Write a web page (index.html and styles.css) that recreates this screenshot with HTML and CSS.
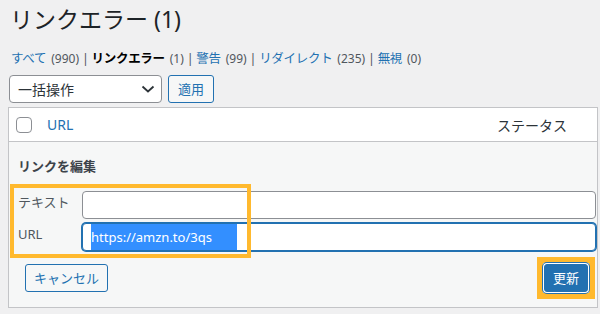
FILE: index.html
```html
<!DOCTYPE html>
<html lang="ja">
<head>
<meta charset="utf-8">
<link rel="stylesheet" href="styles.css">
</head>
<body>
<div class="wrap">
  <h1 class="title">リンクエラー (1)</h1>
  <ul class="subsub">
    <li><a href="#">すべて <span class="count">(990)</span></a> |</li>
    <li><a href="#" class="current">リンクエラー <span class="count">(1)</span></a> |</li>
    <li><a href="#">警告 <span class="count">(99)</span></a> |</li>
    <li><a href="#">リダイレクト <span class="count">(235)</span></a> |</li>
    <li><a href="#">無視 <span class="count">(0)</span></a></li>
  </ul>
  <div class="actions">
    <div class="select">
      <span>一括操作</span>
      <svg class="chev" width="14" height="8" viewBox="0 0 14 8"><path d="M1.5 1.5 L7 6.5 L12.5 1.5" fill="none" stroke="#2c3338" stroke-width="1.8"/></svg>
    </div>
    <button class="btn">適用</button>
  </div>
  <div class="table">
    <div class="thead">
      <span class="cb"></span>
      <a href="#" class="col-url">URL</a>
      <span class="col-status">ステータス</span>
    </div>
    <div class="edit">
      <div class="edit-title">リンクを編集</div>
      <div class="fields">
        <span class="label">テキスト</span>
        <div class="input"></div>
        <span class="label">URL</span>
        <div class="input focus"><span class="sel">https://amzn.to/3qs</span></div>
        <div class="hl-fields"></div>
      </div>
      <div class="buttons">
        <button class="btn cancel">キャンセル</button>
        <span class="hl-btn"><button class="btn primary">更新</button></span>
      </div>
    </div>
  </div>
</div>
</body>
</html>
```
FILE: styles.css
```css
* { box-sizing: border-box; }
html, body { margin: 0; padding: 0; }
body {
  background: #f0f0f1;
  font-family: "Noto Sans", "Noto Sans CJK JP", sans-serif;
  font-size: 13px;
  color: #3c434a;
  width: 600px;
  height: 314px;
  overflow: hidden;
}
.wrap { padding: 4px 2px 0 8px; }
.title {
  margin: 0 0 0 2px;
  font-size: 23px;
  font-weight: 400;
  line-height: 30px;
  color: #1d2327;
}
.subsub {
  list-style: none;
  margin: 14px 0 0 3px;
  padding: 0;
  display: flex;
  line-height: 22px;
  font-size: 12.5px;
  color: #50575e;
  white-space: pre;
  letter-spacing: -0.3px;
}
.subsub li { margin-right: 3px; }
.subsub a { color: #2271b1; text-decoration: none; }
.subsub a.current { color: #000; font-weight: 700; }
.subsub .count { color: #50575e; font-weight: 400; font-size: 12px; margin-left: 2px; letter-spacing: 0; }
.actions { display: flex; gap: 6px; margin-top: 5px; margin-left: 1px; }
.select {
  width: 153px; height: 28px;
  background: #fff;
  border: 1px solid #8c8f94;
  border-radius: 4px;
  display: flex; align-items: center; justify-content: space-between;
  padding: 0 6px 0 8px;
  font-size: 14px;
  color: #2c3338;
}
.btn {
  font-family: inherit;
  font-size: 13px;
  height: 28px;
  padding: 0 9px;
  border: 1px solid #2271b1;
  border-radius: 3px;
  background: #f6f7f7;
  color: #2271b1;
  line-height: 26px;
  white-space: nowrap;
}
.table {
  margin-top: 4px;
  background: #fff;
  border: 1px solid #c3c4c7;
}
.thead {
  height: 34px;
  display: flex; align-items: center;
  border-bottom: 1px solid #c3c4c7;
  padding-left: 7px;
}
.cb {
  width: 16px; height: 16px;
  border: 1px solid #8c8f94;
  border-radius: 4px;
  background: #fff;
}
.col-url { margin-left: 15px; color: #2271b1; text-decoration: none; font-size: 14px; }
.col-status { margin-left: auto; margin-right: 30px; font-size: 14px; color: #2c3338; }
.edit {
  background: #f6f7f7;
  padding: 14px 1px 8px 9px;
}
.edit-title { font-weight: 700; line-height: 20px; color: #3c434a; }
.fields {
  position: relative;
  margin-top: 15px;
  display: grid;
  grid-template-columns: 64px 1fr;
  row-gap: 4px;
  align-items: start;
}
.label { color: #50575e; line-height: 20px; margin-top: 1px; }
.input {
  height: 28px;
  background: #fff;
  border: 1px solid #8c8f94;
  border-radius: 4px;
  padding: 0 8px;
  display: flex; align-items: stretch;
}
.input.focus { border-color: #2271b1; box-shadow: 0 0 0 1px #2271b1; }
.sel {
  background: #338fff;
  color: #fff;
  width: 146px;
  font-size: 13px;
  line-height: 26px;
}
.hl-fields {
  position: absolute;
  left: -8px; top: -7px;
  width: 241px; height: 74px;
  border: 4px solid #ffb92e;
}
.buttons {
  margin-top: 6px;
  display: flex; align-items: center; justify-content: space-between;
  padding: 0 1px 0 7px;
}
.cancel { width: 83px; padding: 0; }
.hl-btn { display: inline-flex; border: 6px solid #ffb92e; }
.primary {
  margin: 1px;
  width: 44px;
  padding: 0;
  background: #2271b1;
  color: #fff;
  box-shadow: 0 0 0 1px #fff, 0 0 0 2px #2271b1;
}
```
